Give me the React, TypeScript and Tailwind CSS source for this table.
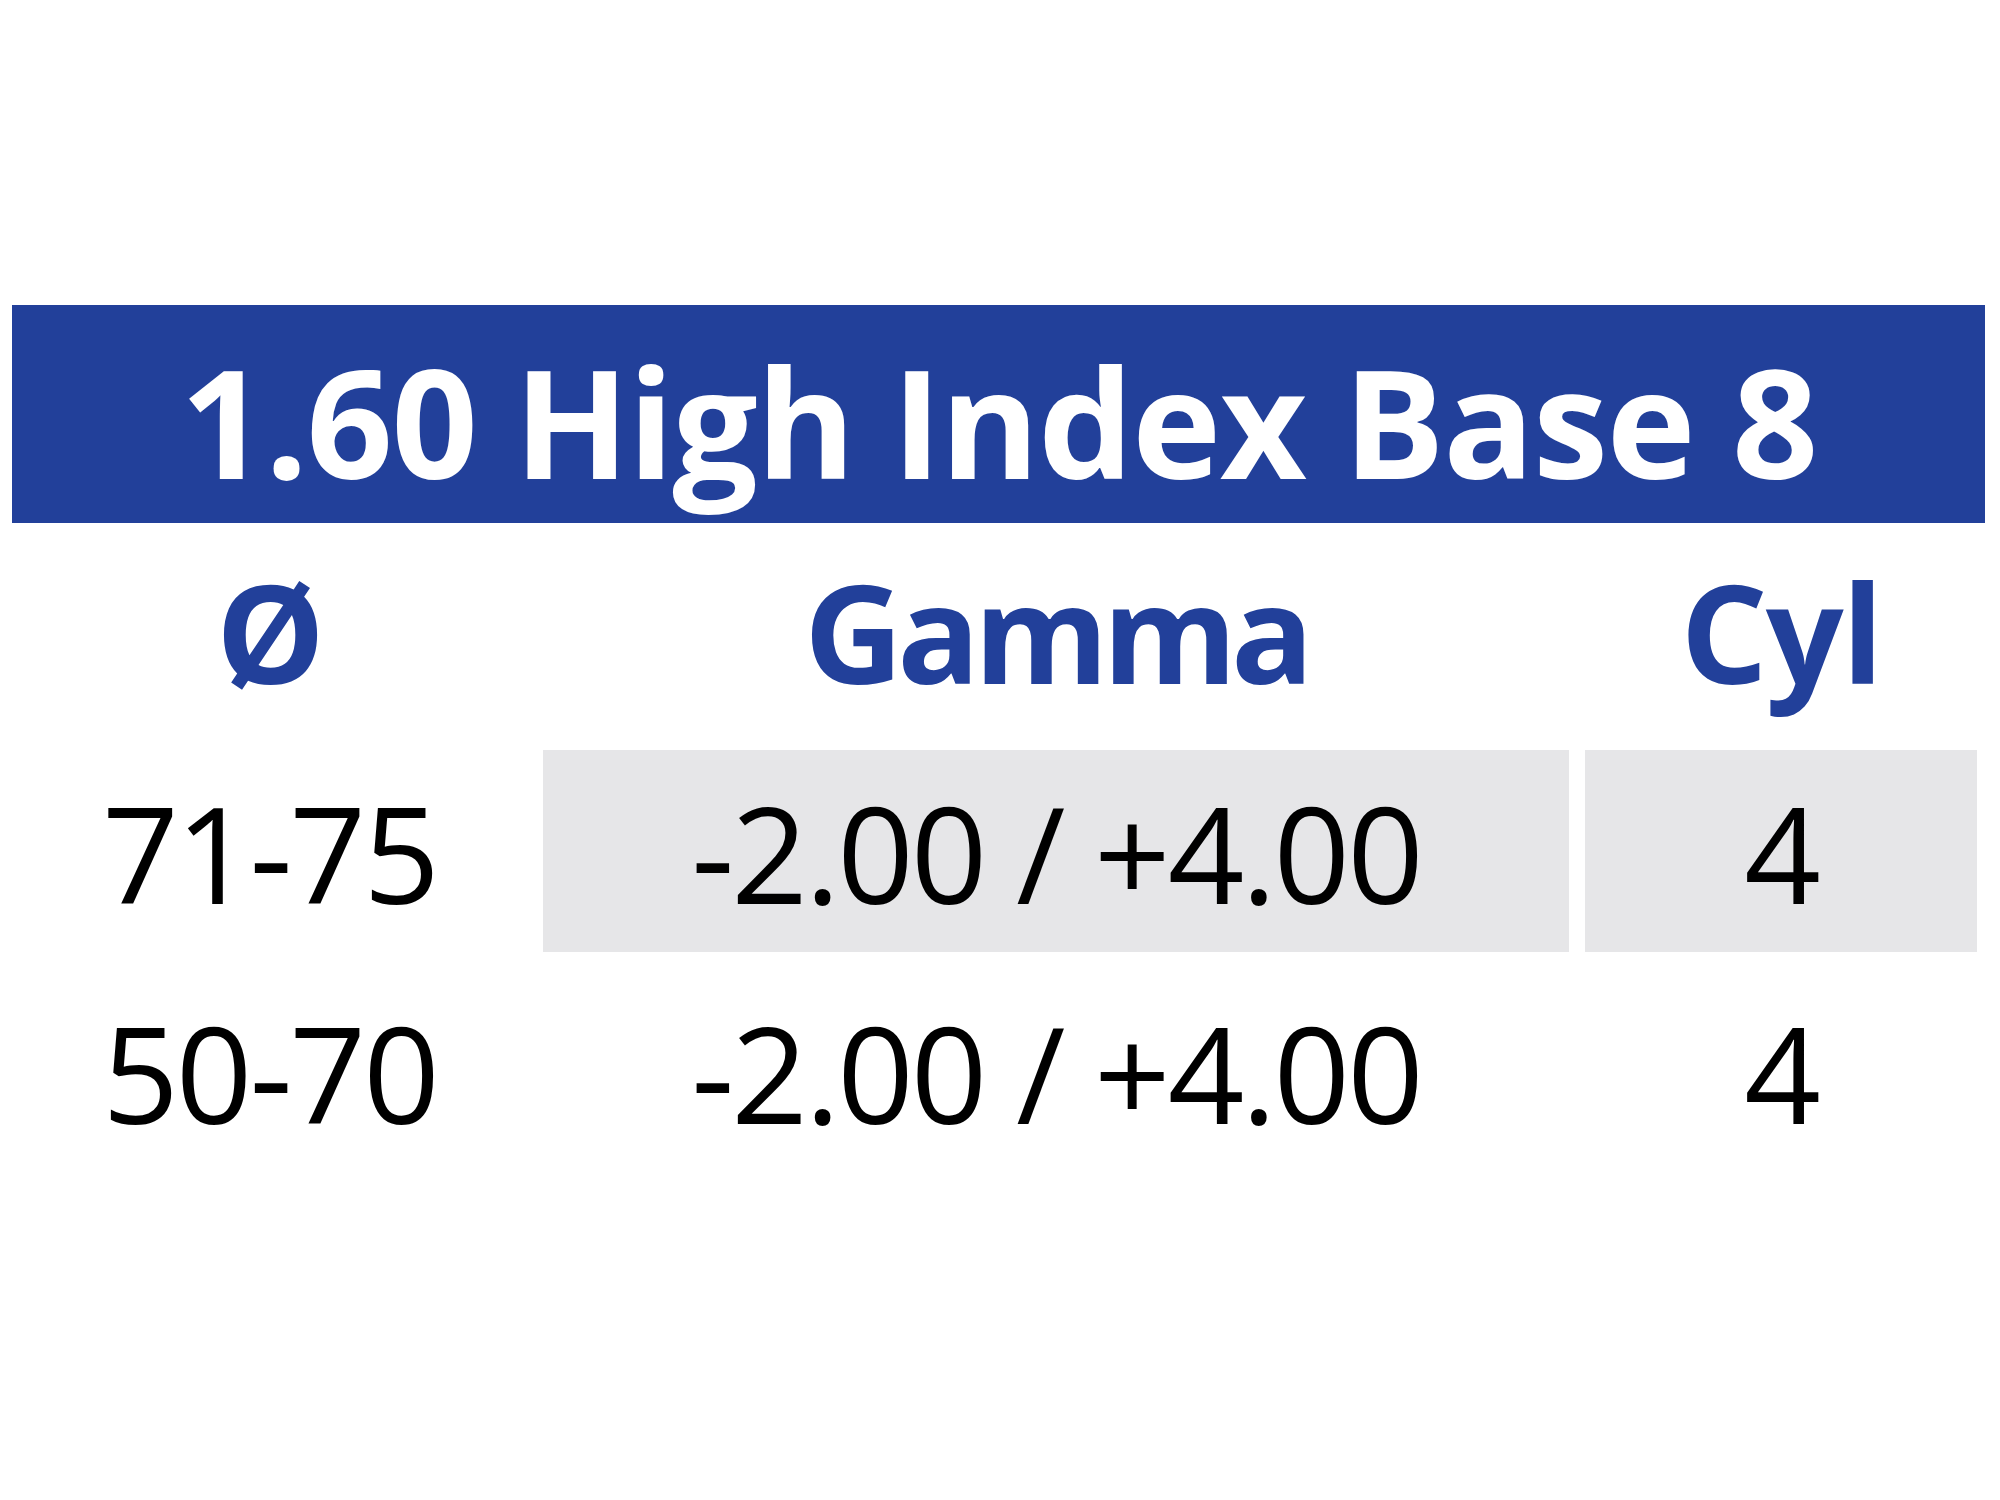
const rows = [
  { dia: "71-75", gamma: "-2.00 / +4.00", cyl: "4", shaded: true },
  { dia: "50-70", gamma: "-2.00 / +4.00", cyl: "4", shaded: false },
];

export default function App() {
  return (
    <div className="w-[2000px] h-[1500px] bg-white pt-[305px] pl-[12px] font-['Open_Sans',sans-serif]">
      <div className="w-[1973px] h-[218px] bg-[#22409a] pt-[13px] text-center">
        <h1 className="text-[151px] leading-[205px] font-bold text-white tracking-[-1.5px]">
          1.60 High Index Base 8
        </h1>
      </div>

      <div className="w-[1965px] h-[227px] grid grid-cols-[515px_1026px_392px] gap-x-4 pt-[3px] text-center text-[137px] leading-[211px] font-bold text-[#22409a] tracking-[-2px]">
        <div>Ø</div>
        <div className="tracking-[-6px]">Gamma</div>
        <div>Cyl</div>
      </div>

      <div className="flex flex-col gap-y-[21px]">
        {rows.map((r) => (
          <div
            key={r.dia}
            className="w-[1965px] grid grid-cols-[515px_1026px_392px] gap-x-4 h-[199px] text-center text-[134px] leading-[199px] text-black tracking-[-3px]"
          >
            <div className="pt-[3px]">{r.dia}</div>
            <div className={r.shaded ? "pt-[3px] bg-[#e6e6e8]" : "pt-[3px]"}>{r.gamma}</div>
            <div className={r.shaded ? "pt-[3px] bg-[#e6e6e8]" : "pt-[3px]"}>{r.cyl}</div>
          </div>
        ))}
      </div>
    </div>
  );
}
